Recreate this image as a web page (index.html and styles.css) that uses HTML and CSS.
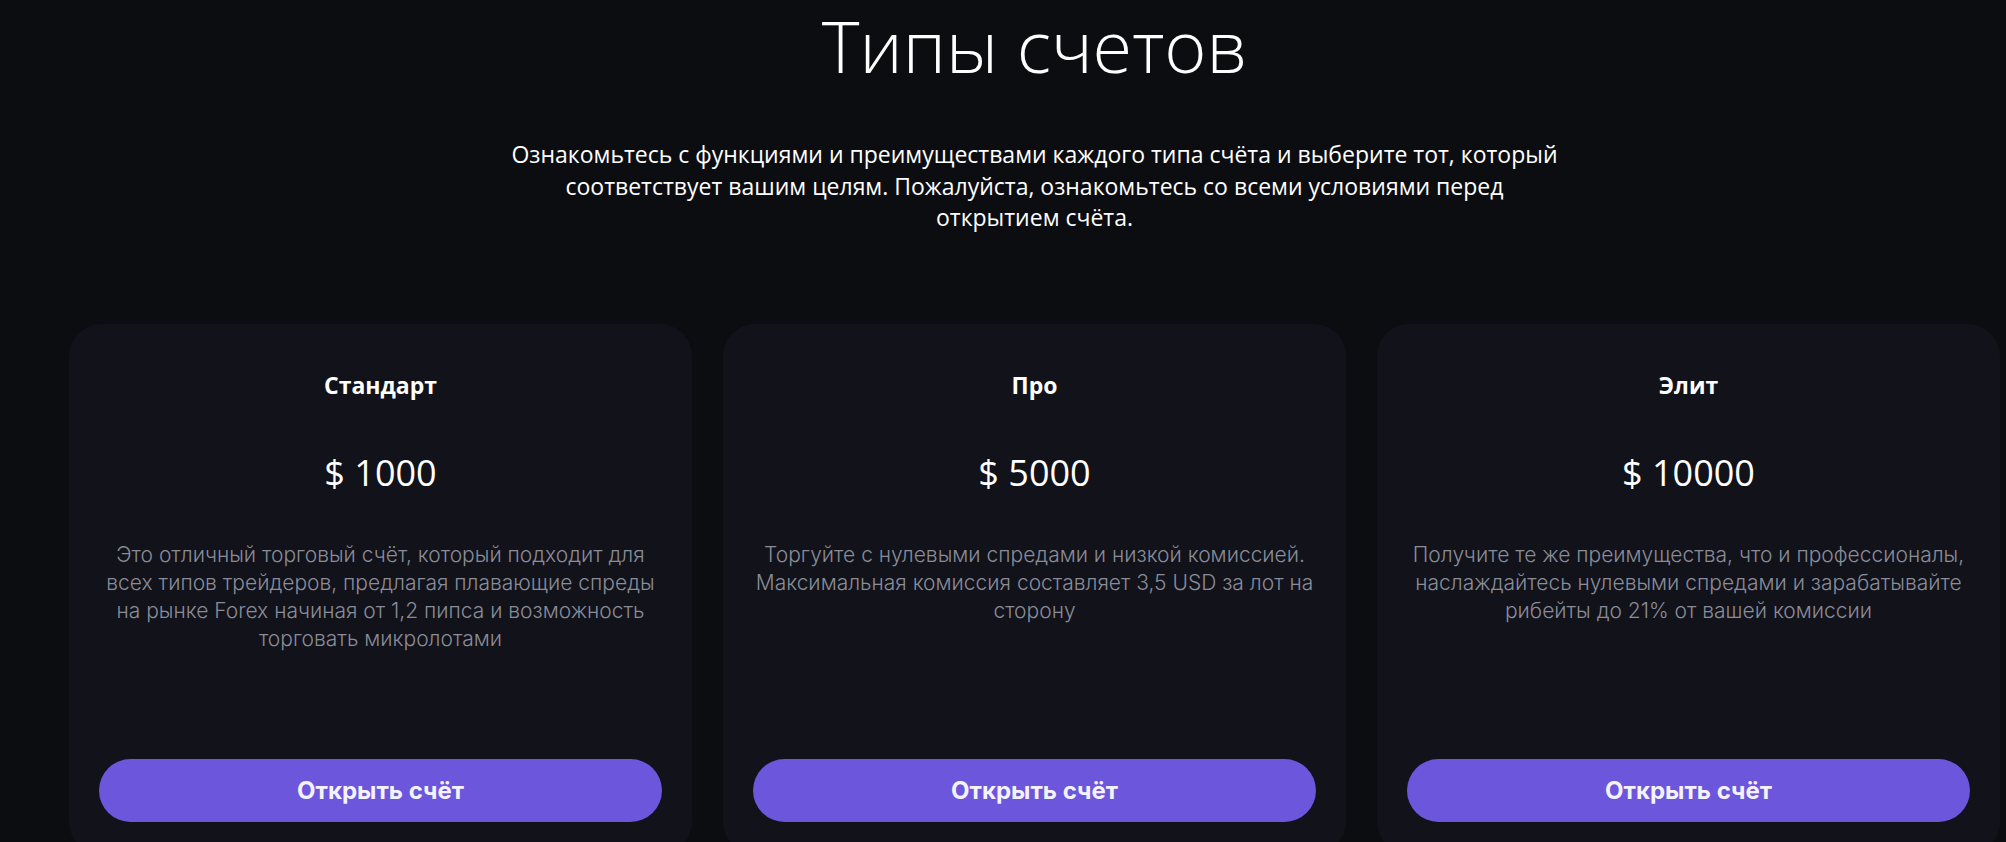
FILE: index.html
```html
<!DOCTYPE html>
<html>
<head lang="ru">
    <meta charset="UTF-8">
    <title>Типы счетов</title>
    <link rel="stylesheet" href="styles.css">
</head>
<body>
<div class="accounts">
    <h1 class="accounts-title">Типы счетов</h1>
    <p class="accounts-lead">Ознакомьтесь с функциями и преимуществами каждого типа счёта и выберите тот, который соответствует вашим целям. Пожалуйста, ознакомьтесь со всеми условиями перед открытием счёта.</p>

    <div class="cards">
        <div class="card">
            <h3 class="card-name">Стандарт</h3>
            <div class="card-price">$ 1000</div>
            <p class="card-text">Это отличный торговый счёт, который подходит для всех типов трейдеров, предлагая плавающие спреды на рынке Forex начиная от 1,2 пипса и возможность торговать микролотами</p>
            <a class="card-btn" href="#">Открыть счёт</a>
        </div>
        <div class="card">
            <h3 class="card-name">Про</h3>
            <div class="card-price">$ 5000</div>
            <p class="card-text">Торгуйте с нулевыми спредами и низкой комиссией. Максимальная комиссия составляет 3,5 USD за лот на сторону</p>
            <a class="card-btn" href="#">Открыть счёт</a>
        </div>
        <div class="card">
            <h3 class="card-name">Элит</h3>
            <div class="card-price">$ 10000</div>
            <p class="card-text">Получите те же преимущества, что и профессионалы, наслаждайтесь нулевыми спредами и зарабатывайте рибейты до 21% от вашей комиссии</p>
            <a class="card-btn" href="#">Открыть счёт</a>
        </div>
    </div>
</div>
</body>
</html>
```

FILE: styles.css
```css
body, h1, h3, p {
    margin: 0;
    padding: 0;
}

body {
    background: #0c0d11;
    color: #fff;
    font-family: "Open Sans", "Liberation Sans", sans-serif;
    overflow: hidden;
}

.accounts {
    padding: 2px 6px 0 69px;
    text-align: center;
}

.accounts-title {
    font-size: 72px;
    font-weight: 300;
    line-height: 86px;
}

.accounts-lead {
    max-width: 1060px;
    margin: 51px auto 0;
    font-size: 23px;
    line-height: 31.5px;
}

.cards {
    display: flex;
    gap: 31px;
    margin-top: 90px;
}

.card {
    flex: 1;
    box-sizing: border-box;
    height: 530px;
    display: flex;
    flex-direction: column;
    align-items: center;
    padding: 45px 30px 0;
    background: #11121a;
    border-radius: 32px;
}

.card-name {
    font-size: 23px;
    font-weight: 700;
    line-height: 32px;
}

.card-price {
    margin-top: 48px;
    font-size: 36px;
    line-height: 48px;
}

.card-text {
    margin-top: 44px;
    font-family: Inter, "Liberation Sans", sans-serif;
    font-size: 21px;
    font-weight: 300;
    line-height: 28px;
    color: #8a8c98;
}

.card-btn {
    align-self: stretch;
    margin-top: auto;
    margin-bottom: 32px;
    height: 63px;
    line-height: 63px;
    border-radius: 32px;
    background: #6c56dc;
    color: #f4f2fc;
    font-family: Inter, "Liberation Sans", sans-serif;
    font-size: 24px;
    font-weight: 700;
    text-decoration: none;
}
```
